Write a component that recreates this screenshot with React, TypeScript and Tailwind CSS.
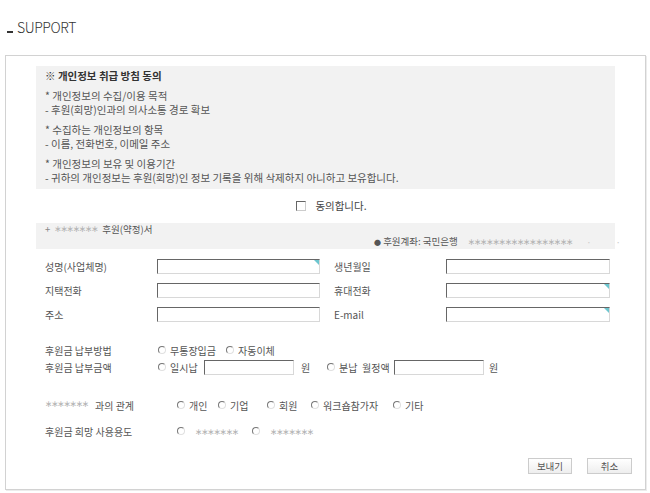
import React from "react";

const font = { fontFamily: '"Noto Sans CJK KR", "Noto Sans", sans-serif' };

function Radio({ label, className = "" }: { label: React.ReactNode; className?: string }) {
  return (
    <span className={`inline-flex items-center shrink-0 whitespace-nowrap ${className}`}>
      <span className="inline-block w-[8px] h-[8px] rounded-full border border-t-[#777] border-l-[#777] border-b-[#e0e0e0] border-r-[#e0e0e0] bg-white mr-[4px]" />
      <span>{label}</span>
    </span>
  );
}

function Field({ corner = false, className = "w-[163px]" }: { corner?: boolean; className?: string }) {
  return (
    <span className={`relative inline-block shrink-0 h-[15px] bg-white border border-t-[#666] border-l-[#666] border-b-[#d8d8d8] border-r-[#d8d8d8] ${className}`}>
      {corner && (
        <span className="absolute top-0 right-0 w-0 h-0 border-t-[5px] border-l-[5px] border-t-[#6cc6cf] border-l-transparent" />
      )}
    </span>
  );
}

function Stars({ n = 7 }: { n?: number }) {
  return (
    <span
      className="shrink-0 whitespace-nowrap text-[#b4b4b4] text-[9px] tracking-[-1.4px]"
      style={{ fontFamily: '"DejaVu Sans", sans-serif' }}
    >
      {"∗".repeat(n)}
    </span>
  );
}

export default function App() {
  return (
    <div className="w-[650px] h-[493px] bg-white text-[10px] text-[#555]" style={font}>
      {/* Title */}
      <div className="h-[55px] pl-[7px] flex items-end">
        <div className="flex items-baseline text-[14px] tracking-[-0.4px] font-light text-[#333] leading-[18px] pb-[19px]">
          <span className="inline-block w-[6px] h-[2px] bg-[#333] mr-[4px]" />
          <span>SUPPORT</span>
        </div>
      </div>

      {/* Frame */}
      <div className="ml-[5px] w-[641px] border border-[#d2d2d2] shadow-[1px_1px_0_#ececec] pt-[10px] pb-[15px]">
        <div className="mx-[30px]">
          {/* Privacy box */}
          <div className="bg-[#f2f2f2] pl-[9px] pt-[3px] pb-[4px] leading-[14px] text-[10.5px]">
            <div className="font-bold text-[#333]">※ 개인정보 취급 방침 동의</div>
            <div className="mt-[6px]">
              <div>* 개인정보의 수집/이용 목적</div>
              <div>- 후원(회망)인과의 의사소통 경로 확보</div>
            </div>
            <div className="mt-[6px]">
              <div>* 수집하는 개인정보의 항목</div>
              <div>- 이름, 전화번호, 이메일 주소</div>
            </div>
            <div className="mt-[6px]">
              <div>* 개인정보의 보유 및 이용기간</div>
              <div>- 귀하의 개인정보는 후원(회망)인 정보 기록을 위해 삭제하지 아니하고 보유합니다.</div>
            </div>
          </div>

          {/* Agree */}
          <div className="mt-[10px] h-[14px] flex items-center justify-center pl-[12px] text-[#444] text-[10.5px]">
            <span className="inline-block w-[10px] h-[10px] border border-t-[#666] border-l-[#666] border-b-[#ccc] border-r-[#ccc] bg-white mr-[9px]" />
            <span>동의합니다.</span>
          </div>

          {/* Pledge box */}
          <div className="mt-[10px] bg-[#f2f2f2] h-[26px] leading-[12px] text-[9.5px]">
            <div className="pl-[9px] flex items-center">
              <span className="text-[#888] mr-[4px]">+</span>
              <Stars />
              <span className="text-[#555] ml-[5px]">후원(약정)서</span>
            </div>
            <div className="pl-[338px] flex items-center whitespace-nowrap">
              <span className="text-[#555] shrink-0">
                <span className="text-[7px] align-middle">●</span> 후원계좌: 국민은행
              </span>
              <span className="ml-[10px] shrink-0"><Stars n={17} /></span>
              <span className="ml-[14px] text-[#ccc]">·</span>
              <span className="ml-[24px] text-[#ccc]">·</span>
            </div>
          </div>

          {/* Personal fields */}
          <div className="mt-[10px] pl-[9px] flex flex-col gap-[9px]">
            <div className="flex items-center h-[15px]">
              <span className="w-[112px]">성명(사업체명)</span>
              <Field corner />
              <span className="ml-[14px] w-[112px]">생년월일</span>
              <Field className="w-[164px]" />
            </div>
            <div className="flex items-center h-[15px]">
              <span className="w-[112px]">지택전화</span>
              <Field />
              <span className="ml-[14px] w-[112px]">휴대전화</span>
              <Field corner className="w-[164px]" />
            </div>
            <div className="flex items-center h-[15px]">
              <span className="w-[112px]">주소</span>
              <Field />
              <span className="ml-[14px] w-[112px]">E-mail</span>
              <Field corner className="w-[164px]" />
            </div>
          </div>

          {/* Payment */}
          <div className="mt-[21px] pl-[9px]">
            <div className="flex items-center h-[14px]">
              <span className="w-[113px] shrink-0">후원금 납부방법</span>
              <Radio label="무통장입금" className="w-[68px]" />
              <Radio label="자동이체" />
            </div>
            <div className="mt-[2px] flex items-center h-[16px]">
              <span className="w-[113px] shrink-0">후원금 납부금액</span>
              <Radio label="일시납" className="w-[46px]" />
              <Field className="w-[90px]" />
              <span className="ml-[7px] w-[26px] shrink-0">원</span>
              <Radio label="분납" className="w-[35px]" />
              <span className="w-[32px] shrink-0">월정액</span>
              <Field className="w-[90px]" />
              <span className="ml-[5px]">원</span>
            </div>
          </div>

          {/* Relation */}
          <div className="mt-[23px] pl-[9px]">
            <div className="flex items-center h-[14px]">
              <span className="w-[132px] shrink-0 flex items-center">
                <Stars />
                <span className="ml-[7px]">과의 관계</span>
              </span>
              <Radio label="개인" className="w-[41px]" />
              <Radio label="기업" className="w-[49px]" />
              <Radio label="회원" className="w-[44px]" />
              <Radio label="워크숍참가자" className="w-[82px]" />
              <Radio label="기타" />
            </div>
            <div className="mt-[12px] flex items-center h-[14px]">
              <span className="w-[132px] shrink-0">후원금 희망 사용용도</span>
              <Radio label={<span className="ml-[6px]"><Stars /></span>} className="w-[75px]" />
              <Radio label={<span className="ml-[6px]"><Stars /></span>} />
            </div>
          </div>
        </div>

        {/* Buttons */}
        <div className="mt-[20px] flex justify-end pr-[13px] gap-[15px] text-[9.5px]">
          <button className="w-[44px] h-[16px] leading-[14px] border border-[#ccc] bg-gradient-to-b from-white to-[#eee] text-[#555]">
            보내기
          </button>
          <button className="w-[45px] h-[16px] leading-[14px] border border-[#ccc] bg-gradient-to-b from-white to-[#eee] text-[#555]">
            취소
          </button>
        </div>
      </div>
    </div>
  );
}
